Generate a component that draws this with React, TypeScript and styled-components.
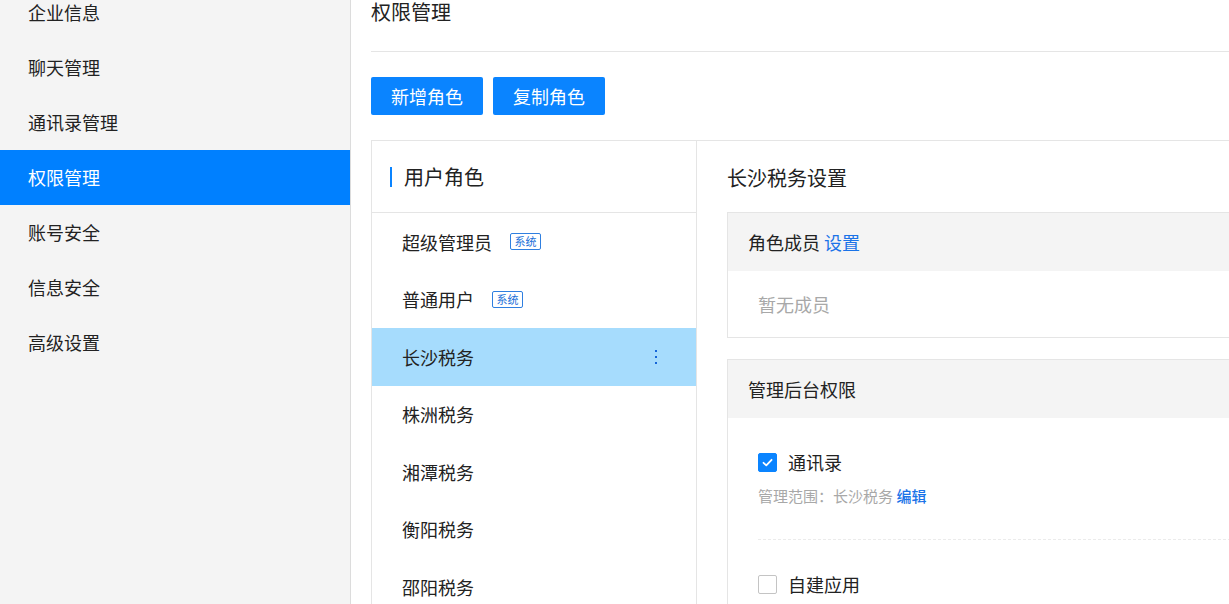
import styled, { createGlobalStyle } from 'styled-components';

const GlobalStyle = createGlobalStyle`
  html, body {
    margin: 0;
    padding: 0;
    overflow: hidden;
    background: #fff;
  }
  body {
    font-family: "Noto Sans CJK SC", "Noto Sans", sans-serif;
    color: #222;
  }
`;

const menu = ['企业信息', '聊天管理', '通讯录管理', '权限管理', '账号安全', '信息安全', '高级设置'];

const roles = [
  { name: '超级管理员', system: true },
  { name: '普通用户', system: true },
  { name: '长沙税务', active: true },
  { name: '株洲税务' },
  { name: '湘潭税务' },
  { name: '衡阳税务' },
  { name: '邵阳税务' },
];

const App = () => (
  <>
    <GlobalStyle />
    <Page>
      <Sidebar>
        <MenuList>
          {menu.map((m) => (
            <MenuItem key={m} $active={m === '权限管理'}>{m}</MenuItem>
          ))}
        </MenuList>
      </Sidebar>
      <Main>
        <PageHeader>权限管理</PageHeader>
        <Toolbar>
          <Button>新增角色</Button>
          <Button>复制角色</Button>
        </Toolbar>
        <Panel>
          <RoleColumn>
            <RoleHeader>
              <Bar />
              用户角色
            </RoleHeader>
            {roles.map((r) => (
              <RoleItem key={r.name} $active={r.active}>
                {r.name}
                {r.system && <Tag>系统</Tag>}
                {r.active && (
                  <Kebab>
                    <i />
                    <i />
                    <i />
                  </Kebab>
                )}
              </RoleItem>
            ))}
          </RoleColumn>
          <Detail>
            <DetailTitle>长沙税务设置</DetailTitle>
            <Card>
              <CardHeader>
                角色成员 <Link>设置</Link>
              </CardHeader>
              <MemberBody>暂无成员</MemberBody>
            </Card>
            <Card $gap>
              <CardHeader>管理后台权限</CardHeader>
              <PermBody>
                <CheckRow>
                  <Check $checked>
                    <svg width="13" height="13" viewBox="0 0 13 13">
                      <path d="M2.5 6.8 L5.3 9.4 L10.6 3.8" fill="none" stroke="#fff" strokeWidth="1.8" strokeLinecap="round" strokeLinejoin="round" />
                    </svg>
                  </Check>
                  通讯录
                </CheckRow>
                <Scope>
                  管理范围：长沙税务 <SmallLink>编辑</SmallLink>
                </Scope>
                <Divider />
                <CheckRow>
                  <Check />
                  自建应用
                </CheckRow>
              </PermBody>
            </Card>
          </Detail>
        </Panel>
      </Main>
    </Page>
  </>
);

const Page = styled.div`
  display: flex;
  height: 604px;
  overflow: hidden;
`;

const Sidebar = styled.nav`
  flex: none;
  width: 350px;
  background: #f4f4f4;
  border-right: 1px solid #dcdcdc;
  overflow: hidden;
`;

/* list is scrolled up by 15px in the reference */
const MenuList = styled.div`
  margin-top: -15px;
`;

const MenuItem = styled.div<{ $active?: boolean }>`
  height: 55px;
  line-height: 55px;
  padding-left: 28px;
  font-size: 18px;
  background: ${(p) => (p.$active ? '#0080ff' : 'transparent')};
  color: ${(p) => (p.$active ? '#fff' : '#222')};
`;

const Main = styled.main`
  flex: none;
  width: 940px;
  padding-left: 20px;
  overflow: hidden;
`;

const PageHeader = styled.h1`
  margin: 0;
  padding: 0 0 27px;
  font-size: 20px;
  line-height: 24px;
  font-weight: normal;
  border-bottom: 1px solid #e5e5e5;
`;

const Toolbar = styled.div`
  display: flex;
  gap: 10px;
  margin-top: 25px;
`;

const Button = styled.button`
  width: 112px;
  height: 38px;
  border: none;
  border-radius: 2px;
  background: #0a84ff;
  color: #fff;
  font-family: inherit;
  font-size: 18px;
  padding: 0;
`;

const Panel = styled.section`
  display: flex;
  margin-top: 25px;
  border: 1px solid #e5e5e5;
  border-right: none;
  border-bottom: none;
`;

const RoleColumn = styled.div`
  flex: none;
  width: 324px;
  border-right: 1px solid #e5e5e5;
`;

const RoleHeader = styled.div`
  display: flex;
  align-items: center;
  box-sizing: border-box;
  height: 72px;
  padding-left: 18px;
  font-size: 20px;
  border-bottom: 1px solid #e5e5e5;
`;

const Bar = styled.span`
  width: 2px;
  height: 20px;
  background: #0a84ff;
  margin-right: 12px;
`;

const RoleItem = styled.div<{ $active?: boolean }>`
  display: flex;
  align-items: center;
  height: 57.5px;
  padding: 0 30px;
  font-size: 18px;
  background: ${(p) => (p.$active ? '#a6dcfd' : 'transparent')};
`;

const Tag = styled.span`
  margin-left: 18px;
  width: 31px;
  height: 17px;
  box-sizing: border-box;
  border: 1px solid #2f7fe0;
  border-radius: 2px;
  color: #1a6fd8;
  font-size: 11px;
  line-height: 15px;
  text-align: center;
`;

const Kebab = styled.span`
  margin-left: auto;
  margin-right: 9px;
  display: flex;
  flex-direction: column;
  gap: 4px;
  i {
    width: 2px;
    height: 2px;
    background: #1565d8;
  }
`;

const Detail = styled.div`
  flex: 1;
  padding-left: 30px;
`;

const DetailTitle = styled.h2`
  margin: 0;
  height: 71px;
  line-height: 74px;
  font-size: 20px;
  font-weight: normal;
`;

const Card = styled.div<{ $gap?: boolean }>`
  border: 1px solid #e5e5e5;
  border-right: none;
  margin-top: ${(p) => (p.$gap ? '21px' : '0')};
`;

const CardHeader = styled.div`
  height: 58px;
  line-height: 58px;
  padding-left: 20px;
  background: #f4f4f4;
  font-size: 18px;
`;

const Link = styled.span`
  color: #1a73e8;
`;

const MemberBody = styled.div`
  height: 66px;
  line-height: 66px;
  padding-left: 30px;
  color: #a8a8a8;
  font-size: 18px;
`;

const PermBody = styled.div`
  padding: 34px 30px;
`;

const CheckRow = styled.label`
  display: flex;
  align-items: center;
  gap: 11px;
  height: 20px;
  font-size: 18px;
`;

const Check = styled.span<{ $checked?: boolean }>`
  display: flex;
  align-items: center;
  justify-content: center;
  width: 19px;
  height: 19px;
  box-sizing: border-box;
  border-radius: 2px;
  background: ${(p) => (p.$checked ? '#0a84ff' : '#fff')};
  border: 1px solid ${(p) => (p.$checked ? '#0a84ff' : '#c4c4c4')};
`;

const Scope = styled.div`
  margin-top: 14px;
  font-size: 15px;
  line-height: 20px;
  color: #a8a8a8;
`;

const SmallLink = styled.span`
  color: #1a73e8;
  font-weight: 500;
`;

const Divider = styled.div`
  margin: 33px 0 34px;
  border-top: 1px dashed #ebebeb;
`;

export default App;
